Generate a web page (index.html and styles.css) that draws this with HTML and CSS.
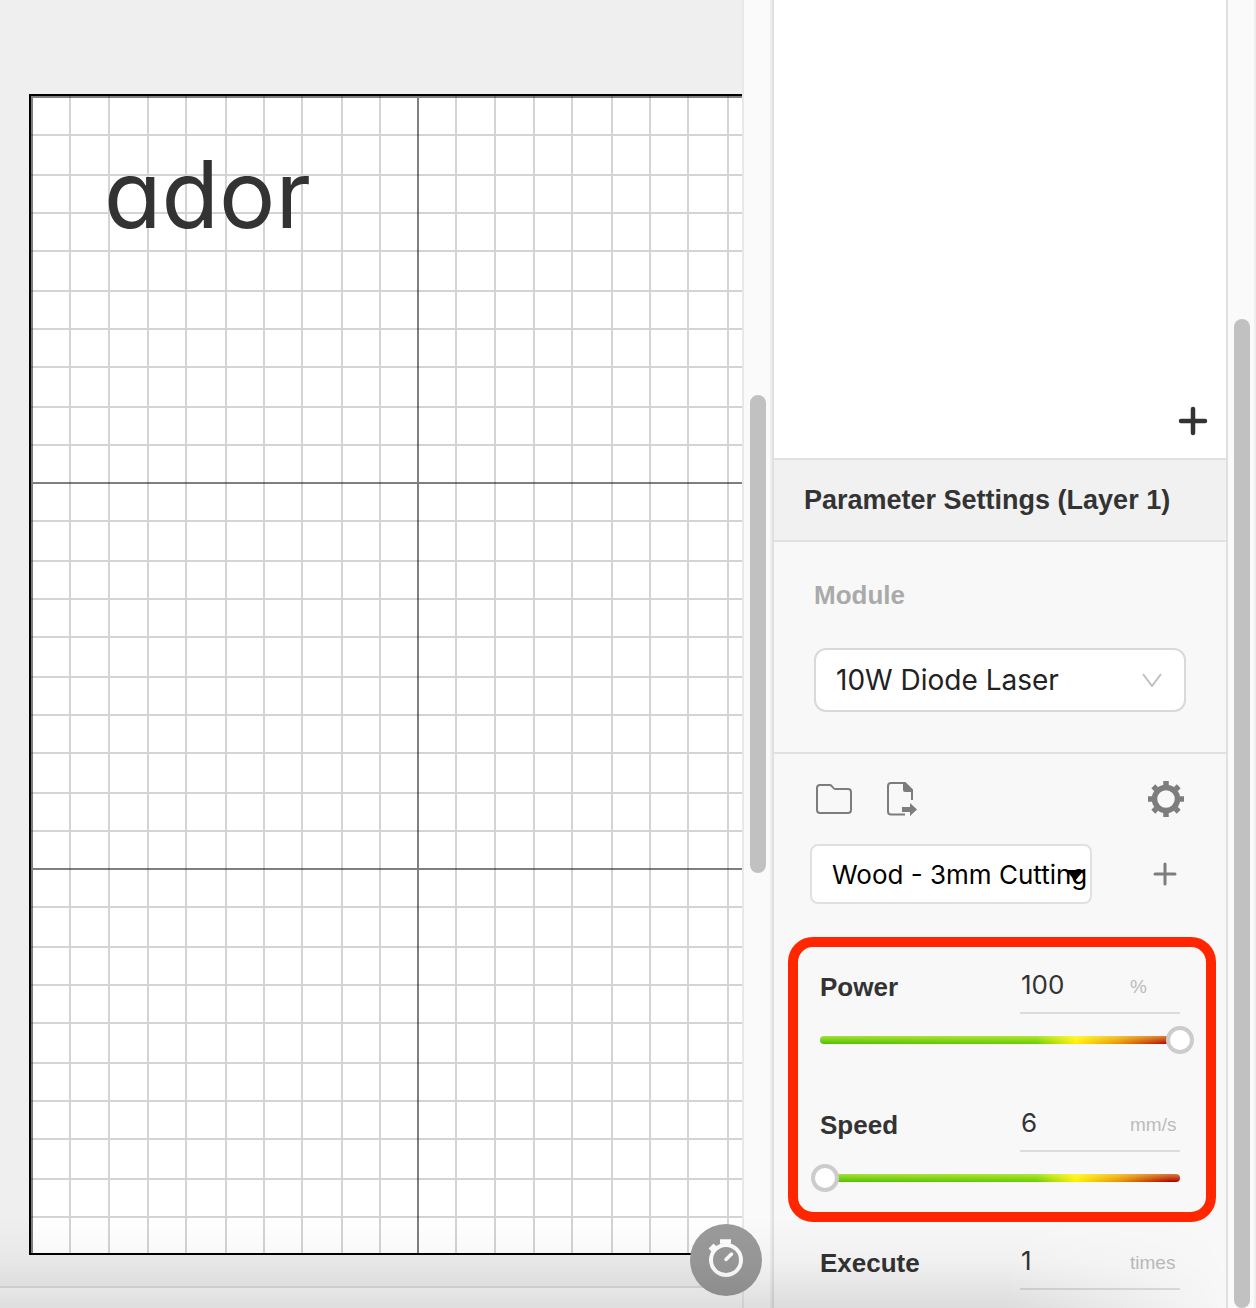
FILE: index.html
```html
<!DOCTYPE html>
<html lang="en">
<head>
<meta charset="utf-8">
<title>Workspace</title>
<link rel="stylesheet" href="styles.css">
</head>
<body>
<div class="app">
  <main class="workspace">
    <svg class="board" role="img" aria-label="Work area">
      <defs>
        <pattern id="grid" width="386" height="386" patternUnits="userSpaceOnUse">
          <path class="grid-soft" d="M39 0V386M78 0V386M117 0V386M155 0V386M195 0V386M233 0V386M271 0V386M311 0V386M349 0V386M0 39H386M0 79H386M0 117H386M0 155H386M0 195H386M0 233H386M0 271H386M0 311H386M0 349H386"/>
          <path class="grid-major" d="M1 0V386M0 1H386"/>
        </pattern>
      </defs>
      <rect width="100%" height="100%" fill="url(#grid)"/>
      <text class="board-text" x="73" y="132">ador</text>
    </svg>
    <div class="status"></div>
    <button class="timer" type="button" aria-label="Estimate time">
      <svg width="72" height="72" viewBox="0 0 72 72" fill="none" stroke="#fff">
        <circle cx="36" cy="36" r="15" stroke-width="4"/>
        <path d="M36 35.500L41.500 30" stroke-width="3.500" stroke-linecap="round"/>
        <path d="M30 17.500H41" stroke-width="4.500" stroke-linejoin="round"/>
        <path d="M36 19V22" stroke-width="6"/>
        <path d="M20 26L25 21" stroke-width="4"/>
      </svg>
    </button>
  </main>
  <div class="track track-canvas"><div class="thumb thumb-canvas"></div></div>
  <aside class="panel">
    <section class="layers">
      <button class="icon-button" type="button" aria-label="Add layer">
        <svg width="30" height="30" viewBox="0 0 30 30" stroke="#333" stroke-width="4.500" stroke-linecap="round"><path d="M3 15H27M15 3V27"/></svg>
      </button>
    </section>
    <h2 class="panel-title">Parameter Settings (Layer 1)</h2>
    <section class="module">
      <label class="module-label" for="module">Module</label>
      <div class="picker">
        <select id="module" class="module-select"><option>10W Diode Laser</option></select>
        <svg class="picker-arrow" width="20" height="14" viewBox="0 0 20 14" fill="none" stroke="#bfbfbf" stroke-width="2"><path d="M1 1L10 13L19 1"/></svg>
      </div>
    </section>
    <section class="params">
      <div class="tools">
        <button class="icon-button" type="button" aria-label="Open presets">
          <svg width="36" height="36" viewBox="0 0 36 36" fill="none" stroke="#7d7d7d" stroke-width="2"><path d="M4 4H14C16 4 17 8 19 8H32Q35 8 35 11V29Q35 32 32 32H4Q1 32 1 29V7Q1 4 4 4Z"/></svg>
        </button>
        <button class="icon-button" type="button" aria-label="Export presets">
          <svg width="32" height="36" viewBox="0 0 32 36" fill="none" stroke="#7d7d7d" stroke-width="2"><path d="M19 33.500H5Q2 33.500 2 30.500V5Q2 2 5 2H19L26 9V19"/><path d="M17 2H20L26 9V11H19Q17 11 17 9Z" fill="#7d7d7d" stroke="none"/><path d="M16 26H24V22L31 28.500L24 35V31H16Z" fill="#7d7d7d" stroke="none"/></svg>
        </button>
        <button class="icon-button tools-end" type="button" aria-label="Preset settings">
          <svg width="36" height="36" viewBox="-18 -18 36 36" fill="none" stroke="#7d7d7d"><circle r="11.500" stroke-width="5.500"/><path d="M-14 0H-18M14 0H18M0-14V-18M0 14V18M-9.800-9.800L-12.700-12.700M9.800-9.800L12.700-12.700M-9.800 9.800L-12.700 12.700M9.800 9.800L12.700 12.700" stroke-width="5.500"/></svg>
        </button>
      </div>
      <div class="preset">
        <div class="picker preset-picker">
          <select class="preset-select" aria-label="Preset"><option>Wood - 3mm Cutting</option></select>
          <svg class="preset-arrow" width="18" height="11" viewBox="0 0 18 11"><path d="M0 0H18L9 11Z"/></svg>
        </div>
        <button class="icon-button" type="button" aria-label="Add preset">
          <svg width="24" height="24" viewBox="0 0 24 24" stroke="#7d7d7d" stroke-width="3" stroke-linecap="round"><path d="M2 12H22M12 2V22"/></svg>
        </button>
      </div>
      <div class="highlight">
        <div class="row">
          <label for="power">Power</label>
          <div class="field"><input id="power" type="text" value="100"><span class="unit">%</span></div>
        </div>
        <div class="slider"><input type="range" min="0" max="100" value="100" aria-label="Power"></div>
        <div class="row row-next">
          <label for="speed">Speed</label>
          <div class="field"><input id="speed" type="text" value="6"><span class="unit">mm/s</span></div>
        </div>
        <div class="slider"><input type="range" min="0" max="400" value="6" aria-label="Speed"></div>
      </div>
      <div class="row row-plain">
        <label for="execute">Execute</label>
        <div class="field"><input id="execute" type="text" value="1"><span class="unit">times</span></div>
      </div>
    </section>
  </aside>
  <div class="track track-panel"><div class="thumb thumb-panel"></div></div>
</div>
<div class="shade"></div>
</body>
</html>
```
FILE: styles.css
```css
* { box-sizing: border-box; }

body {
  margin: 0;
  height: 100vh;
  overflow: hidden;
  color: #333;
  font-family: "Liberation Sans", Arial, sans-serif;
}

.app {
  display: grid;
  grid-template-columns: minmax(0, 1fr) 30px 456px 28px;
  height: 100%;
}

/* Canvas */
.workspace {
  position: relative;
  display: flex;
  flex-direction: column;
  padding: 94px 0 0 29px;
  background: #efefef;
}

.board {
  display: block;
  flex: 1;
  width: 100%;
  border: 2px solid #000;
  border-right: 0;
  background: #fff;
}

.grid-soft { stroke: #000; stroke-opacity: 0.17; stroke-width: 2; }
.grid-major { stroke: #000; stroke-opacity: 0.5; stroke-width: 2; }

.board-text {
  fill: #333;
  font: 400 94px Inter, sans-serif;
  font-feature-settings: "cv11";
}

.status {
  height: 53px;
  margin-left: -29px;
  background: linear-gradient(#efefef 31px, #dedede 31px, #dedede 33px, #fafafa 33px);
}

.timer {
  position: absolute;
  right: -20px;
  bottom: 12px;
  z-index: 1;
  padding: 0;
  border: 0;
  border-radius: 50%;
  background: #9b9b9b;
}

.timer svg { display: block; }

/* Scroll tracks */
.track {
  padding: 0 6px;
  background: #fafafa;
}

.track-canvas {
  padding-top: 395px;
  border-left: 2px solid #e8e8e8;
  border-right: 2px solid #eee;
}

.track-panel {
  padding-top: 319px;
  padding-right: 4px;
  border-right: 2px solid #eee;
}

.thumb {
  width: 16px;
  border-radius: 8px;
  background: #c1c1c1;
}

.thumb-canvas { height: 478px; }
.thumb-panel { height: 100%; }

/* Panel */
.panel {
  border: 0 solid #e0e0e0;
  border-width: 0 2px;
  background: #f8f8f8;
  overflow: hidden;
}

.icon-button {
  display: block;
  padding: 0;
  border: 0;
  background: none;
}

.icon-button svg { display: block; }

.layers {
  display: flex;
  align-items: flex-end;
  justify-content: flex-end;
  height: 460px;
  padding: 0 18px 22px;
  border-bottom: 2px solid #e0e0e0;
  background: #fff;
}

.panel-title {
  margin: 0;
  padding: 0 30px;
  border-bottom: 2px solid #e0e0e0;
  background: #f1f1f1;
  font-size: 27px;
  line-height: 80px;
  white-space: nowrap;
}

.module {
  padding: 37px 40px 40px;
  border-bottom: 2px solid #e0e0e0;
}

.module-label {
  display: block;
  margin-bottom: 37px;
  color: #aaa;
  font-size: 26px;
  font-weight: 700;
  line-height: 32px;
}

.picker {
  position: relative;
}

.picker select {
  appearance: none;
  display: block;
  width: 100%;
  margin: 0;
  background: #fff;
}

.picker svg {
  position: absolute;
  pointer-events: none;
}

.module-select {
  height: 64px;
  padding: 0 20px;
  border: 2px solid #d9d9d9;
  border-radius: 12px;
  color: #222;
  font: 28px Inter, sans-serif;
}

.picker-arrow { right: 24px; top: 25px; }

.tools {
  display: flex;
  align-items: center;
  gap: 34px;
  height: 90px;
  padding: 0 42px;
}

.tools-end { margin-left: auto; }

.preset {
  display: flex;
  align-items: center;
  justify-content: space-between;
  margin-bottom: 33px;
  padding: 0 49px 0 36px;
}

.preset-picker { width: 282px; }

.preset-select {
  height: 60px;
  padding: 0 0 0 20px;
  border: 2px solid #e0e0e0;
  border-radius: 8px;
  color: #000;
  font: 26px Inter, sans-serif;
}

.preset-arrow { right: 8px; top: 26px; }

.highlight {
  margin: 0 10px 16px 14px;
  padding: 15px 26px 30px 22px;
  border: 10px solid #ff2600;
  border-radius: 25px;
}

.row {
  display: grid;
  grid-template-columns: minmax(0, 1fr) 160px;
  height: 52px;
}

.row-next { margin-top: 56px; }
.row-plain { margin: 0 46px; }

.row label {
  font-size: 26px;
  font-weight: 700;
  line-height: 50px;
}

.field {
  display: flex;
  align-items: flex-start;
  border-bottom: 2px solid #dcdcdc;
}

.field input {
  width: 110px;
  height: 44px;
  padding: 0 0 0 1px;
  border: 0;
  background: none;
  color: #333;
  font: 26px Inter, sans-serif;
}

.unit {
  color: #bbb;
  font-size: 19px;
  line-height: 50px;
}

.slider {
  height: 8px;
  margin-top: 22px;
  border-radius: 4px;
  background:
    linear-gradient(rgba(255, 255, 110, 0.5), transparent),
    linear-gradient(90deg, #50c000, #68cc00 60%, #fff000 71%, #e89000 83%, #b00000 97%);
}

.slider input {
  appearance: none;
  display: block;
  width: calc(100% + 28px);
  height: 28px;
  margin: 0 -14px;
  background: none;
  transform: translateY(-10px);
}

.slider input::-webkit-slider-thumb {
  appearance: none;
  width: 28px;
  height: 28px;
  border: 4px solid #ccc;
  border-radius: 50%;
  background: #fff;
}

/* Soft shadow along the bottom of the window */
.shade {
  position: fixed;
  inset: auto 0 0;
  z-index: 2;
  height: 90px;
  background: linear-gradient(transparent, rgba(0, 0, 0, 0.03) 50%, rgba(0, 0, 0, 0.11));
  mask-image: linear-gradient(90deg, #000 80%, transparent 98%);
  pointer-events: none;
}
```
